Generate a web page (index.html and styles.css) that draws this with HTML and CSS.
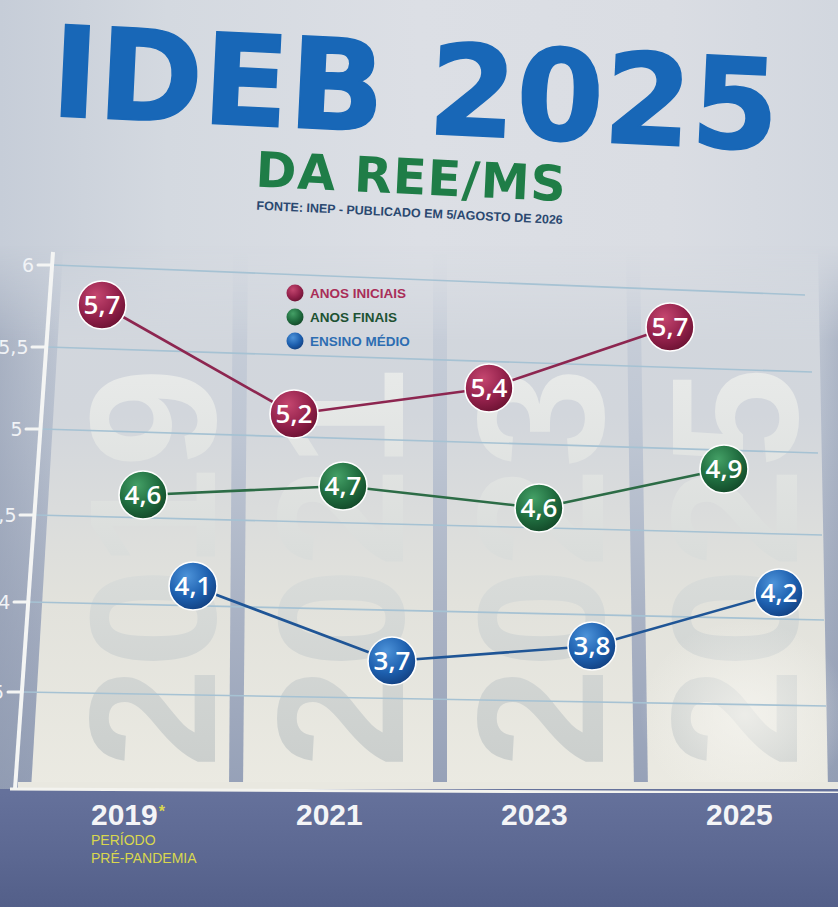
FILE: index.html
```html
<!DOCTYPE html>
<html lang="pt-BR">
<head>
<meta charset="utf-8">
<title>IDEB 2025 da REE/MS</title>
<link rel="stylesheet" href="styles.css">
</head>
<body>
<main class="poster">
  <header class="head">
    <h1 class="title">IDEB 2025</h1>
    <p class="sub">DA REE/MS</p>
    <p class="src">FONTE: INEP - PUBLICADO EM 5/AGOSTO DE 2026</p>
  </header>

  <section class="chart">
    <svg class="plot" viewBox="0 245 838 548" width="838" height="548" xmlns="http://www.w3.org/2000/svg">
      <defs>
        <linearGradient id="bg" x1="0" y1="245" x2="0" y2="793" gradientUnits="userSpaceOnUse">
          <stop offset="0" stop-color="#cdd3dc"/>
          <stop offset="0.35" stop-color="#bec6d3"/>
          <stop offset="0.7" stop-color="#a8b1c3"/>
          <stop offset="1" stop-color="#95a0b7"/>
        </linearGradient>
        <linearGradient id="fadeGrad" x1="0" y1="245" x2="0" y2="340" gradientUnits="userSpaceOnUse">
          <stop offset="0" stop-color="#fff" stop-opacity="0"/>
          <stop offset="1" stop-color="#fff" stop-opacity="1"/>
        </linearGradient>
        <mask id="fadeTop" maskUnits="userSpaceOnUse" x="0" y="245" width="838" height="548">
          <rect x="0" y="245" width="838" height="548" fill="url(#fadeGrad)"/>
        </mask>
        <linearGradient id="leftShade" x1="0" y1="0" x2="80" y2="0" gradientUnits="userSpaceOnUse">
          <stop offset="0" stop-color="#8c97ae" stop-opacity="0.5"/>
          <stop offset="1" stop-color="#8c97ae" stop-opacity="0"/>
        </linearGradient>
        <linearGradient id="rightShade" x1="838" y1="0" x2="805" y2="0" gradientUnits="userSpaceOnUse">
          <stop offset="0" stop-color="#8c97ae" stop-opacity="0.4"/>
          <stop offset="1" stop-color="#8c97ae" stop-opacity="0"/>
        </linearGradient>
        <linearGradient id="panel" x1="0" y1="254" x2="0" y2="790" gradientUnits="userSpaceOnUse">
          <stop offset="0" stop-color="#d2d7de"/>
          <stop offset="0.3" stop-color="#d2d6dc"/>
          <stop offset="0.65" stop-color="#e2e2dc"/>
          <stop offset="1" stop-color="#ebeae2"/>
        </linearGradient>
        <linearGradient id="dig" x1="0" y1="0" x2="400" y2="0" gradientUnits="userSpaceOnUse">
          <stop offset="0" stop-color="#cbcfcd"/>
          <stop offset="0.5" stop-color="#d9dcda"/>
          <stop offset="1" stop-color="#e8eae9"/>
        </linearGradient>
        <radialGradient id="glare" cx="0.5" cy="0.5" r="0.5">
          <stop offset="0" stop-color="#f6f5f0" stop-opacity="0.75"/>
          <stop offset="1" stop-color="#f6f5f0" stop-opacity="0"/>
        </radialGradient>
        <radialGradient id="gM" cx="0.38" cy="0.3" r="0.75">
          <stop offset="0" stop-color="#c4466f"/>
          <stop offset="0.6" stop-color="#93214b"/>
          <stop offset="1" stop-color="#6a1131"/>
        </radialGradient>
        <radialGradient id="gG" cx="0.38" cy="0.3" r="0.75">
          <stop offset="0" stop-color="#44a066"/>
          <stop offset="0.6" stop-color="#1f6b3e"/>
          <stop offset="1" stop-color="#124727"/>
        </radialGradient>
        <radialGradient id="gB" cx="0.38" cy="0.3" r="0.75">
          <stop offset="0" stop-color="#4d93d9"/>
          <stop offset="0.6" stop-color="#1d5fae"/>
          <stop offset="1" stop-color="#123f7f"/>
        </radialGradient>
      </defs>

      <g mask="url(#fadeTop)">
        <rect x="0" y="245" width="838" height="548" fill="url(#bg)"/>
        <rect x="0" y="245" width="80" height="548" fill="url(#leftShade)"/>
        <rect x="805" y="245" width="33" height="548" fill="url(#rightShade)"/>
        <g class="panels" fill="url(#panel)">
          <polygon points="63,252 233,254 229,790 31,790"/>
          <polygon points="248,254 433,254 433,790 243,790"/>
          <polygon points="447,254 626,254 634,790 447,790"/>
          <polygon points="640,254 818,254 828,790 648,790"/>
        </g>
      </g>

      <g class="digits">
        <text transform="translate(215 768) rotate(-90)">2019</text>
        <text transform="translate(403 768) rotate(-90)">2021</text>
        <text transform="translate(603 768) rotate(-90)">2023</text>
        <text transform="translate(797 768) rotate(-90)">2025</text>
      </g>
      <ellipse cx="745" cy="715" rx="105" ry="95" fill="url(#glare)"/>

      <g class="grid" stroke="#a6c2d3" stroke-width="1.6">
        <line x1="53" y1="265" x2="805" y2="295"/>
        <line x1="47" y1="347" x2="812" y2="372"/>
        <line x1="41" y1="429" x2="818" y2="453"/>
        <line x1="35" y1="515" x2="822" y2="535"/>
        <line x1="29" y1="602" x2="824" y2="620"/>
        <line x1="23" y1="692" x2="826" y2="706"/>
      </g>

      <polygon points="18,782 838,782 838,792 18,788" fill="#e9e8e0"/>
      <rect x="0" y="789" width="838" height="4" fill="#65719b"/>
      <line x1="10" y1="789" x2="838" y2="793" stroke="#f3f3ef" stroke-width="3"/>

      <line x1="53" y1="252" x2="15" y2="789" stroke="#f4f5f4" stroke-width="4"/>
      <g class="ticks" stroke="#f4f5f4" stroke-width="3" stroke-linecap="round">
        <line x1="38" y1="265" x2="51" y2="265"/>
        <line x1="32" y1="347" x2="45" y2="347"/>
        <line x1="26" y1="429" x2="39" y2="429"/>
        <line x1="20" y1="515" x2="33" y2="515"/>
        <line x1="14" y1="602" x2="27" y2="602"/>
        <line x1="8" y1="692" x2="21" y2="692"/>
      </g>
      <g class="tick-label">
        <text x="34" y="272">6</text>
        <text x="28.5" y="354">5,5</text>
        <text x="22.6" y="436">5</text>
        <text x="16.5" y="522">4,5</text>
        <text x="10.4" y="609">4</text>
        <text x="4" y="699">3,5</text>
      </g>

      <g class="legend">
        <circle cx="295" cy="293" r="8.5" fill="url(#gM)"/>
        <circle cx="295" cy="317" r="8.5" fill="url(#gG)"/>
        <circle cx="295" cy="341" r="8.5" fill="url(#gB)"/>
        <text class="legend-text lg-m" x="310" y="298">ANOS INICIAIS</text>
        <text class="legend-text lg-g" x="310" y="322">ANOS FINAIS</text>
        <text class="legend-text lg-b" x="310" y="346">ENSINO MÉDIO</text>
      </g>

      <g class="series" fill="none" stroke-width="2.6" stroke-linejoin="round">
        <polyline stroke="#8d2650" points="102,305 294,414 489,388 670,327"/>
        <polyline stroke="#2c6c46" points="143,495 343,486 539,508 724,469"/>
        <polyline stroke="#1f5596" points="193,586 392,661 592,646 779,593"/>
      </g>

      <g class="bubbles" stroke="#ffffff" stroke-width="1.6">
        <circle cx="102" cy="305" r="24" fill="url(#gM)"/>
        <circle cx="294" cy="414" r="24" fill="url(#gM)"/>
        <circle cx="489" cy="388" r="24" fill="url(#gM)"/>
        <circle cx="670" cy="327" r="24" fill="url(#gM)"/>
        <circle cx="143" cy="495" r="24" fill="url(#gG)"/>
        <circle cx="343" cy="486" r="24" fill="url(#gG)"/>
        <circle cx="539" cy="508" r="24" fill="url(#gG)"/>
        <circle cx="724" cy="469" r="24" fill="url(#gG)"/>
        <circle cx="193" cy="586" r="24" fill="url(#gB)"/>
        <circle cx="392" cy="661" r="24" fill="url(#gB)"/>
        <circle cx="592" cy="646" r="24" fill="url(#gB)"/>
        <circle cx="779" cy="593" r="24" fill="url(#gB)"/>
      </g>
      <g class="bubble-text">
        <text x="102" y="314">5,7</text>
        <text x="294" y="423">5,2</text>
        <text x="489" y="397">5,4</text>
        <text x="670" y="336">5,7</text>
        <text x="143" y="504">4,6</text>
        <text x="343" y="495">4,7</text>
        <text x="539" y="517">4,6</text>
        <text x="724" y="478">4,9</text>
        <text x="193" y="595">4,1</text>
        <text x="392" y="670">3,7</text>
        <text x="592" y="655">3,8</text>
        <text x="779" y="602">4,2</text>
      </g>
    </svg>
  </section>

  <footer class="years">
    <div class="yr">
      <span class="yr-num">2019<span class="ast">*</span></span>
      <span class="note">PERÍODO<br>PRÉ-PANDEMIA</span>
    </div>
    <div class="yr"><span class="yr-num">2021</span></div>
    <div class="yr"><span class="yr-num">2023</span></div>
    <div class="yr"><span class="yr-num">2025</span></div>
  </footer>
</main>
</body>
</html>
```

FILE: styles.css
```css
* { box-sizing: border-box; }
html, body { margin: 0; padding: 0; }
body {
  background: #d9dde3;
  font-family: "Liberation Sans", Arial, sans-serif;
}
.poster {
  width: 838px;
  height: 907px;
  overflow: hidden;
  display: flex;
  flex-direction: column;
  background: linear-gradient(90deg, #c6cdd8 0%, #d4d9e0 20%, #dcdfe5 50%, #dadde3 80%, #d2d7df 100%);
}
.head {
  flex: none;
  height: 245px;
  display: flex;
  flex-direction: column;
  align-items: center;
  padding: 27px 10px 0 0;
  transform: rotate(2.7deg);
  transform-origin: 414px 120px;
}
.title {
  margin: 0;
  font-family: "DejaVu Sans", sans-serif;
  font-weight: 700;
  font-size: 126px;
  line-height: 1;
  color: #1867b7;
  -webkit-text-stroke: 1.5px #1867b7;
  white-space: nowrap;
}
.sub {
  margin: 0;
  font-family: "DejaVu Sans", sans-serif;
  font-weight: 700;
  font-size: 49px;
  line-height: 1;
  letter-spacing: 1px;
  color: #1f7d47;
  white-space: nowrap;
}
.src {
  margin: 5px 0 0;
  font-family: "Liberation Sans", Arial, sans-serif;
  font-weight: 700;
  font-size: 12.5px;
  line-height: 1;
  color: #2a4870;
  white-space: nowrap;
}
.chart {
  flex: none;
  height: 548px;
}
.plot { display: block; }

.digits text {
  font-family: "Liberation Sans", Arial, sans-serif;
  font-weight: 700;
  font-size: 180px;
  fill: url(#dig);
}
.tick-label text {
  font-family: "DejaVu Sans", sans-serif;
  font-size: 19px;
  fill: #f1f3f6;
  text-anchor: end;
}
.legend-text {
  font-family: "Liberation Sans", Arial, sans-serif;
  font-weight: 700;
  font-size: 13.5px;
}
.lg-m { fill: #a92d58; }
.lg-g { fill: #1d5233; }
.lg-b { fill: #2d6db2; }
.bubble-text text {
  font-family: "Open Sans", "Liberation Sans", sans-serif;
  font-weight: 600;
  font-size: 26px;
  fill: #ffffff;
  text-anchor: middle;
}

.years {
  flex: 1;
  display: grid;
  grid-template-columns: repeat(4, 205px);
  align-content: start;
  padding: 7px 0 0 91px;
  background: linear-gradient(180deg, #65719b 0%, #5c6892 55%, #535f89 100%);
}
.yr {
  display: flex;
  flex-direction: column;
  align-items: flex-start;
}
.yr-num {
  font-family: "Liberation Sans", Arial, sans-serif;
  font-weight: 700;
  font-size: 30px;
  line-height: 1;
  color: #f4f5f7;
}
.ast {
  color: #d9d74e;
  font-size: 16px;
  vertical-align: 8px;
  margin-left: 1px;
}
.note {
  margin-top: 1px;
  font-size: 14px;
  line-height: 18px;
  color: #d9d74e;
}
```
